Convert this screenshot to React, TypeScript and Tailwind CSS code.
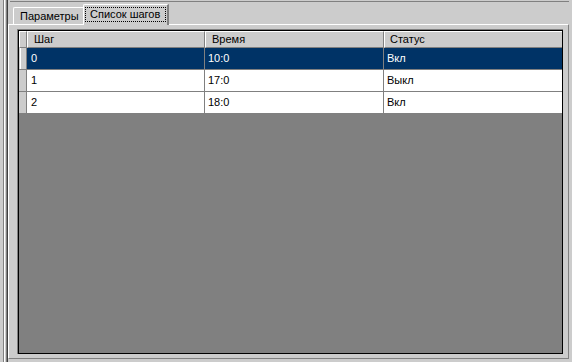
import React from "react";

const rows = [
  { step: "0", time: "10:0", status: "Вкл", selected: true },
  { step: "1", time: "17:0", status: "Выкл", selected: false },
  { step: "2", time: "18:0", status: "Вкл", selected: false },
];

export default function App() {
  return (
    <div className="flex w-[572px] h-[362px] bg-[#cccccc] overflow-hidden font-['Liberation_Sans',Arial,sans-serif] text-[11px] text-black">
      {/* left frame lines */}
      <div className="w-[3px] shrink-0" />
      <div className="w-px shrink-0 bg-[#808080]" />
      <div className="w-px shrink-0 bg-white" />
      <div className="w-px shrink-0" />
      <div className="w-px shrink-0 bg-[#808080]" />
      <div className="w-px shrink-0 bg-[#404040]" />

      <div className="flex flex-col w-[561px] shrink-0">
        {/* top line */}
        <div className="h-px" />
        <div className="h-px bg-[#808080] ml-[2px]" />
        {/* tab strip */}
        <div className="flex items-end h-[22px] pl-[5px]">
          <div className="h-[17px] w-[70px] border-t border-l border-white rounded-tl-[2px] pl-[6px] leading-[16px]">
            Параметры
          </div>
          <div className="relative z-10 -mb-px h-[21px] w-[86px] bg-[#cccccc] border-t border-l border-white border-r-2 border-r-[#808080] rounded-tl-[2px] pl-px pt-[2px]">
            <div className="h-[15px] w-[81px] border border-dotted border-black pl-[4px] leading-[13px]">
              Список шагов
            </div>
          </div>
        </div>

        {/* panel */}
        <div className="flex-1 flex flex-col border-t border-l border-white border-r border-r-[#808080] border-b border-b-[#808080] pl-[8px] pt-[4px] pr-[5px] pb-[4px] mb-[3px]">
          <div className="flex-1 flex flex-col border-t border-l border-[#808080] border-r-0 border-b-0">
            <div className="flex-1 flex flex-col border-t border-l border-black border-r border-b bg-[#808080]">
              {/* header */}
              <div className="flex h-[17px] bg-[#cccccc]">
                <div className="w-[8px] shrink-0 border-t border-l border-white border-r border-b border-r-[#808080] border-b-[#808080]" />
                <div className="w-[178px] shrink-0 border-t border-l border-white border-r border-b border-r-[#808080] border-b-[#808080] pl-[6px] leading-[15px]">
                  Шаг
                </div>
                <div className="w-[179px] shrink-0 border-t border-l border-white border-r border-b border-r-[#808080] border-b-[#808080] pl-[6px] leading-[15px]">
                  Время
                </div>
                <div className="flex-1 border-t border-l border-white border-b border-b-[#808080] pl-[5px] leading-[15px]">
                  Статус
                </div>
              </div>
              {/* rows */}
              {rows.map((r) => (
                <div key={r.step} className="flex h-[22px] border-b border-[#808080]">
                  <div className="relative w-[8px] shrink-0 bg-[#cccccc] border-r border-[#808080]">
                    {r.selected ? (
                      <div className="absolute left-[1px] top-0 bottom-0 w-px bg-white" />
                    ) : null}
                  </div>
                  <div
                    className={
                      "w-[178px] shrink-0 border-r border-[#808080] pl-[4px] leading-[21px] " +
                      (r.selected ? "bg-[#003366] text-white" : "bg-white")
                    }
                  >
                    {r.step}
                  </div>
                  <div
                    className={
                      "w-[179px] shrink-0 border-r border-[#808080] pl-[3px] leading-[21px] " +
                      (r.selected ? "bg-[#003366] text-white" : "bg-white")
                    }
                  >
                    {r.time}
                  </div>
                  <div
                    className={
                      "flex-1 pl-[3px] leading-[21px] " +
                      (r.selected ? "bg-[#003366] text-white" : "bg-white")
                    }
                  >
                    {r.status}
                  </div>
                </div>
              ))}
            </div>
          </div>
        </div>
      </div>
    </div>
  );
}
